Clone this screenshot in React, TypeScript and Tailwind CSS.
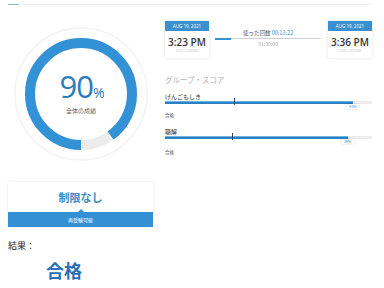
const BLUE = "#3391d6";

function Ring() {
  const r = 51;
  const c = 2 * Math.PI * r;
  return (
    <div className="relative w-[136px] h-[136px]">
      <svg width="136" height="136" viewBox="0 0 136 136">
        <circle cx="68" cy="68" r="66" fill="none" stroke="#f2f3f4" strokeWidth="1.5" />
        <circle cx="68" cy="68" r={r} fill="none" stroke="#ececec" strokeWidth="10" />
        <circle
          cx="68"
          cy="68"
          r={r}
          fill="none"
          stroke={BLUE}
          strokeWidth="10"
          strokeDasharray={`${c * 0.9} ${c}`}
          transform="rotate(90 68 68)"
        />
      </svg>
      <div className="absolute inset-0 flex flex-col items-center justify-center">
        <div className="flex items-baseline text-[#2b7bbd] leading-none pl-[2px] mt-[-2px]">
          <span className="text-[31px] font-['Open_Sans',sans-serif] tracking-[-1px]">90</span>
          <span className="text-[14px] font-['Open_Sans',sans-serif]">%</span>
        </div>
        <div className="text-[6px] leading-[8px] text-[#666] mt-[5px]">全体の成績</div>
      </div>
    </div>
  );
}

function TimeBox({ time }: { time: string }) {
  return (
    <div className="w-[44px] h-[37px] bg-white shadow-[0_0_3px_rgba(0,0,0,0.12)] flex flex-col items-center">
      <div className="w-full h-[10px] bg-[#3a8fd0] text-white text-[4.5px] flex items-center justify-center font-['Open_Sans',sans-serif]">
        AUG 19, 2021
      </div>
      <div className="mt-[5px] text-[10px] leading-[12px] font-semibold text-[#333] font-['Open_Sans',sans-serif]">
        {time}
      </div>
      <div className="text-[4px] leading-[6px] text-[#bbb] font-['Open_Sans',sans-serif]">(UTC+09:00)</div>
    </div>
  );
}

function ScoreRow({
  label,
  pct,
  tick,
  value,
  mt,
}: {
  label: string;
  pct: number;
  tick: number;
  value: string;
  mt: string;
}) {
  return (
    <div className={mt}>
      <div className="text-[6px] leading-[7px] text-[#333]">{label}</div>
      <div className="relative mt-[1px] h-[3px] w-[207px] bg-[#ededed]">
        <div className="h-[3px] bg-[#2a80c2] border-t border-[#6db0e2]" style={{ width: `${pct}%` }} />
        <div
          className="absolute top-[-3px] w-px h-[7px] bg-[#2c4a66]"
          style={{ left: `${tick}px` }}
        />
        <div
          className="absolute top-[3px] w-[13px] h-[5px] bg-white shadow-[0_0_2px_rgba(0,0,0,0.2)] rounded-[1px] text-[3.5px] leading-[5px] text-center text-[#2d87c8]"
          style={{ left: `calc(${pct}% - 7px)` }}
        >
          {value}
        </div>
      </div>
    </div>
  );
}

export default function App() {
  return (
    <div className="w-[384px] h-[288px] overflow-hidden bg-white font-['Noto_Sans_CJK_JP',sans-serif]">
      <div className="pt-[4px] px-[8px]">
        <div className="w-[364px] h-px bg-[#eef1f4]">
          <div className="w-[11px] h-px bg-[#8fb8e0]" />
        </div>
      </div>
      <div className="flex">
        <div className="w-[160px] flex flex-col">
          <div className="mt-[21px] ml-[13px]">
            <Ring />
          </div>
          <div className="mt-[20px] ml-[8px] w-[145px] bg-white shadow-[0_0_3px_rgba(0,0,0,0.1)]">
            <div className="h-[30px] flex items-center justify-center text-[11px] font-semibold text-[#3a8bc8]">
              制限なし
            </div>
            <div className="relative h-[15px] bg-[#3490d4] flex items-center justify-center text-[5px] text-white">
              <div className="absolute top-[-3px] left-[70px] w-0 h-0 border-l-[3px] border-r-[3px] border-b-[3px] border-l-transparent border-r-transparent border-b-[#3490d4]" />
              再受験可能
            </div>
          </div>
          <div className="mt-[12px] ml-[8px] text-[9px] leading-[13px] text-[#222]">結果：</div>
          <div className="mt-[6px] ml-[46px] text-[18px] leading-[24px] font-bold text-[#2a6fb5]">合格</div>
        </div>
        <div className="ml-[5px] w-[207px] flex flex-col">
          <div className="mt-[16px] flex items-start">
            <TimeBox time="3:23 PM" />
            <div className="flex-1 pl-[6px] pr-[7px] pt-[9px] flex flex-col items-center">
              <div className="text-[5.5px] leading-[6px] text-[#555]">
                使った回数 <span className="text-[#3391d6]">00:13:22</span>
              </div>
              <div className="mt-[2px] w-full h-px bg-[#cfcfcf]">
                <div className="w-[16px] h-[2px] mt-[-0.5px] bg-[#3391d6]" />
              </div>
              <div className="mt-[2px] text-[5px] leading-[6px] text-[#aaa]">01:30:00</div>
            </div>
            <TimeBox time="3:36 PM" />
          </div>
          <div className="mt-[17px] text-[7.5px] leading-[10px] text-[#b0b0b0]">グループ・スコア</div>
          <ScoreRow label="げんごもしき" pct={91} tick={69} value="91%" mt="mt-[8px]" />
          <div className="mt-[8px] text-[4.5px] leading-[6px] text-[#444]">合格</div>
          <ScoreRow label="聴解" pct={88.5} tick={67} value="89%" mt="mt-[10px]" />
          <div className="mt-[10px] text-[4.5px] leading-[6px] text-[#444]">合格</div>
        </div>
      </div>
    </div>
  );
}
